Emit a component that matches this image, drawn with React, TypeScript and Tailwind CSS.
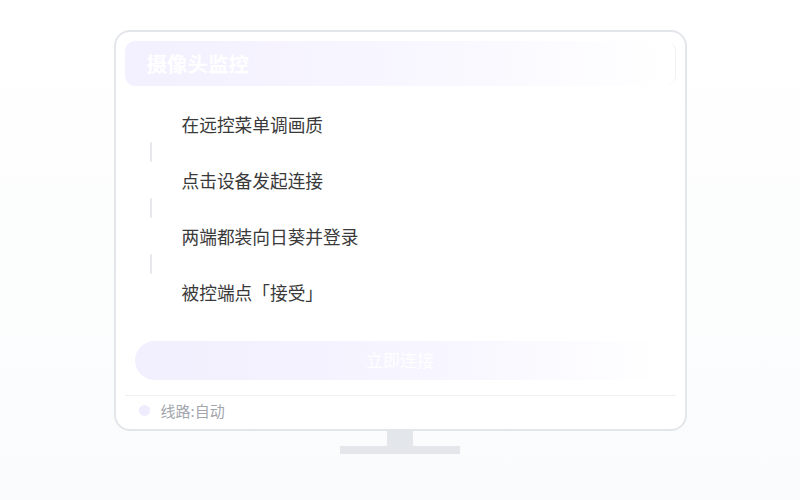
const steps = ["在远控菜单调画质", "点击设备发起连接", "两端都装向日葵并登录", "被控端点「接受」"];

export default function App() {
  return (
    <div
      className="w-[800px] h-[500px] bg-gradient-to-b from-white to-[#fafbfc] flex flex-col items-center pt-[30px]"
      style={{ fontFamily: '"Noto Sans CJK SC", "Noto Sans", sans-serif' }}
    >
      {/* Monitor */}
      <div className="w-[573px] h-[401px] border-2 border-[#e3e6eb] rounded-[16px] bg-white p-[9px] flex flex-col">
        <div className="h-[45px] rounded-[10px] bg-gradient-to-r from-[#f3f0ff] via-[#f8f6ff] to-white border-r border-[#eef0f4] flex items-center pl-[22px]">
          <span className="text-white text-[20.5px] font-bold leading-none">摄像头监控</span>
        </div>

        <div className="flex flex-col pl-[25px] pt-[27px]">
          {steps.map((s, i) => (
            <div key={s} className="flex flex-col">
              <div className="h-[24px] flex items-center pl-[32px] text-[17.7px] text-[#3a3a3a] leading-none">{s}</div>
              {i < steps.length - 1 && (
                <div className="h-[32px] pt-[5px]">
                  <div className="w-[2px] h-[20px] bg-[#e6e8ec] rounded-full" />
                </div>
              )}
            </div>
          ))}
        </div>

        <div className="px-[10px] mt-[36px]">
          <div className="h-[39px] rounded-full bg-gradient-to-r from-[#f2effe] via-[#f6f4ff] to-white flex items-center justify-center pb-[3px]">
            <span className="text-white text-[17px] leading-none">立即连接</span>
          </div>
        </div>

        <div className="mt-[15px] border-t border-[#eef0f3] flex-1 flex items-center pl-[14px] pt-[5px] gap-[11px]">
          <div className="w-[11px] h-[11px] rounded-full bg-[#efecfd]" />
          <span className="text-[15px] text-[#a3a6ad] leading-none">线路:自动</span>
        </div>
      </div>

      {/* Stand */}
      <div className="w-[26px] h-[15px] bg-[#e3e6eb]" />
      <div className="w-[120px] h-[8px] bg-[#e3e6eb]" />
    </div>
  );
}
